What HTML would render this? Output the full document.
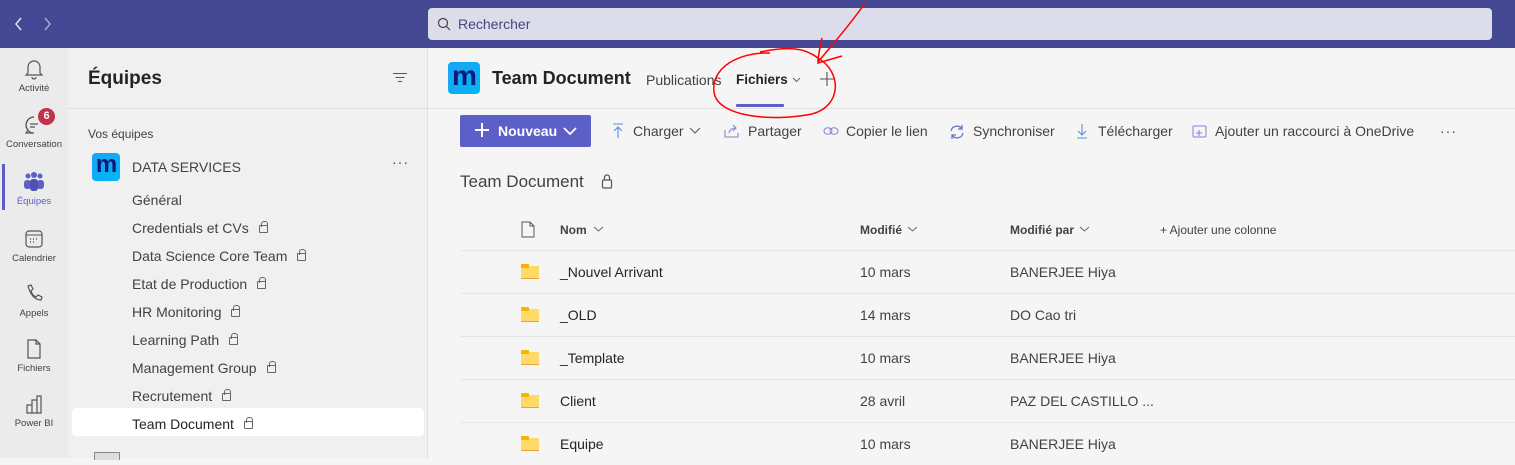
<!DOCTYPE html>
<html><head><meta charset="utf-8"><style>
*{box-sizing:border-box;margin:0;padding:0}
body{width:1515px;height:458px;overflow:hidden;font-family:"Liberation Sans",sans-serif;background:#f5f5f5;position:relative;color:#242424}
.abs{position:absolute}
#top{left:0;top:0;width:1515px;height:48px;background:#444791}
#search{left:428px;top:8px;width:1064px;height:32px;background:#dcdcea;border-radius:4px;color:#424780;font-size:14px;line-height:32px;padding-left:30px}
#rail{left:0;top:48px;width:68px;height:410px;background:#ebebeb}
.ri{position:absolute;left:0;width:68px;text-align:center;font-size:9.5px;color:#424242}
.ri svg{display:block;margin:0 auto 3px}
#panel{left:68px;top:48px;width:360px;height:410px;background:#f0f0f0;border-right:1px solid #e0e0e0}
.ch{position:absolute;left:64px;font-size:14px;color:#424242}
.lock{display:inline-block;width:9px;height:8px;border:1.2px solid #666;border-radius:1px;margin-left:10px;position:relative;top:0}
.lock:before{content:"";position:absolute;left:1px;top:-5px;width:5px;height:5px;border:1.2px solid #666;border-bottom:none;border-radius:3px 3px 0 0}
.logo{background:linear-gradient(135deg,#1aa3f5,#00b7f5);border-radius:4px;color:#0d1a7a;font-weight:bold;text-align:center;font-family:"Liberation Sans",sans-serif;letter-spacing:-1px}
.tb{position:absolute;top:123px;font-size:14px;color:#424242}
.hd{position:absolute;top:223px;font-size:12px;font-weight:bold;color:#424242}
.row{position:absolute;left:460px;width:1055px;height:43px;border-top:1px solid #e6e6e6;font-size:14px;color:#242424}
.row span{position:absolute;top:13px}
.fold{position:absolute;left:61px;top:15px;width:18px;height:13px;background:#ffd96a;border-bottom:1px solid #e8a33a}
.fold:before{content:"";position:absolute;left:0;top:-2px;width:8px;height:4px;background:#f8b200;border-radius:1px}
</style></head><body>
<div id="top" class="abs">
<svg class="abs" style="left:14px;top:16px" width="40" height="16"><path d="M7 2 L2 8 L7 14" stroke="#e0e0f0" stroke-width="1.5" fill="none"/><path d="M31 2 L36 8 L31 14" stroke="#a8aad0" stroke-width="1.5" fill="none"/></svg>
</div>
<div id="search" class="abs">Rechercher<svg class="abs" style="left:9px;top:9px" width="14" height="14"><circle cx="6" cy="6" r="4.5" stroke="#424242" stroke-width="1.2" fill="none"/><path d="M9.5 9.5L13 13" stroke="#424242" stroke-width="1.2"/></svg></div>

<div id="rail" class="abs">
<div class="abs" style="left:2px;top:116px;width:3px;height:46px;background:#5b5fc7"></div>
<div class="ri" style="top:10px"><svg width="20" height="22"><path d="M4 15V9a6 6 0 0 1 12 0v6l2 2H2z M8 19a2 2 0 0 0 4 0" stroke="#555" stroke-width="1.2" fill="none"/></svg>Activité</div>
<div class="ri" style="top:66px"><svg width="22" height="22"><path d="M11 3a8 8 0 1 0 0 16H3l2-3A8 8 0 0 1 11 3z M7 10h8M7 13h5" stroke="#555" stroke-width="1.2" fill="none"/></svg>Conversation</div>
<div class="abs" style="left:38px;top:60px;width:17px;height:17px;border-radius:50%;background:#c4314b;color:#fff;font-size:11px;font-weight:bold;text-align:center;line-height:17px">6</div>
<div class="ri" style="top:123px;color:#5b5fc7"><svg width="24" height="22"><circle cx="6" cy="5" r="2.5" fill="#5b5fc7"/><circle cx="12" cy="4" r="3" fill="#5b5fc7"/><circle cx="18" cy="5" r="2.5" fill="#5b5fc7"/><rect x="2" y="9" width="7" height="9" rx="3" fill="#5b5fc7"/><rect x="15" y="9" width="7" height="9" rx="3" fill="#5b5fc7"/><rect x="8" y="8" width="8" height="12" rx="3" fill="#4f52b2"/></svg>Équipes</div>
<div class="ri" style="top:180px"><svg width="22" height="22"><rect x="3" y="3" width="16" height="16" rx="3" stroke="#555" stroke-width="1.2" fill="none"/><path d="M3 7h16" stroke="#555"/><path d="M7 11h1M10 11h1M13 11h1M7 14h1M10 14h1" stroke="#555" stroke-width="1.4"/></svg>Calendrier</div>
<div class="ri" style="top:235px"><svg width="22" height="22"><path d="M5 3l3-1 2 4-2 2q1 4 5 6l2-2 4 2-1 3q-9 0-13-14z" stroke="#555" stroke-width="1.2" fill="none"/></svg>Appels</div>
<div class="ri" style="top:290px"><svg width="22" height="22"><path d="M5 2h8l4 4v14H5z M13 2v4h4" stroke="#555" stroke-width="1.2" fill="none"/></svg>Fichiers</div>
<div class="ri" style="top:345px"><svg width="22" height="22"><path d="M4 20V12h5V20z M9 20V7h5V20z M14 20V3h4V20z" stroke="#555" stroke-width="1.2" fill="none"/></svg>Power BI</div>
</div>

<div id="panel" class="abs">
<div class="abs" style="left:20px;top:20px;font-size:19px;font-weight:bold;color:#242424">Équipes</div>
<svg class="abs" style="left:324px;top:24px" width="16" height="12"><path d="M1 1.5h14M3.5 5.5h9M6 9.5h4" stroke="#555" stroke-width="1.1"/></svg>
<div class="abs" style="left:0;top:60px;width:360px;height:1px;background:#dedede"></div>
<div class="abs" style="left:20px;top:79px;font-size:12px;color:#424242">Vos équipes</div>
<div class="abs logo" style="left:24px;top:105px;width:28px;height:28px;font-size:24px;line-height:24px">m</div>
<div class="abs" style="left:64px;top:111px;font-size:14px;color:#424242">DATA SERVICES</div>
<div class="abs" style="left:324px;top:106px;font-size:14px;color:#424242;letter-spacing:1px">···</div>
<div class="ch" style="top:144px">Général</div>
<div class="ch" style="top:172px">Credentials et CVs<span class="lock"></span></div>
<div class="ch" style="top:200px">Data Science Core Team<span class="lock"></span></div>
<div class="ch" style="top:228px">Etat de Production<span class="lock"></span></div>
<div class="ch" style="top:256px">HR Monitoring<span class="lock"></span></div>
<div class="ch" style="top:284px">Learning Path<span class="lock"></span></div>
<div class="ch" style="top:312px">Management Group<span class="lock"></span></div>
<div class="ch" style="top:340px">Recrutement<span class="lock"></span></div>
<div class="abs" style="left:4px;top:360px;width:352px;height:28px;background:#fff;border-radius:4px"></div>
<div class="ch" style="top:368px;color:#242424">Team Document<span class="lock"></span></div>
<div class="abs" style="left:26px;top:404px;width:26px;height:8px;border:1px solid #888;border-bottom:none;background:#ddd"></div>
</div>

<div class="abs logo" style="left:448px;top:62px;width:32px;height:32px;font-size:28px;line-height:28px">m</div>
<div class="abs" style="left:492px;top:68px;font-size:18px;font-weight:bold">Team Document</div>
<div class="abs" style="left:646px;top:72px;font-size:14px;color:#424242">Publications</div>
<div class="abs" style="left:736px;top:72px;font-size:13.5px;font-weight:bold;color:#242424">Fichiers</div>
<svg class="abs" style="left:792px;top:77px" width="9" height="6"><path d="M1 1l3.5 3.5 3.5-3.5" stroke="#666" fill="none"/></svg>
<div class="abs" style="left:736px;top:104px;width:48px;height:3px;background:#5b5fc7;border-radius:1px"></div>
<svg class="abs" style="left:820px;top:72px" width="14" height="14"><path d="M7 0v14M0 7h14" stroke="#555" stroke-width="1.1"/></svg>
<div class="abs" style="left:428px;top:108px;width:1087px;height:1px;background:#e0e0e0"></div>

<div class="abs" style="left:460px;top:115px;width:131px;height:32px;background:#5b5fc7;border-radius:2px;color:#fff;font-size:14px;font-weight:bold;line-height:32px;padding-left:38px">Nouveau</div>
<svg class="abs" style="left:474px;top:122px" width="16" height="16"><path d="M8 1v14M1 8h14" stroke="#fff" stroke-width="2"/></svg>
<svg class="abs" style="left:563px;top:127px" width="14" height="8"><path d="M1 1l6 6 6-6" stroke="#fff" stroke-width="1.8" fill="none"/></svg>
<svg class="abs" style="left:612px;top:123px" width="12" height="16"><path d="M1 1h10M6 4v11M2 8l4-4 4 4" stroke="#5b8fd4" stroke-width="1.1" fill="none"/></svg>
<div class="tb" style="left:633px">Charger</div>
<svg class="abs" style="left:689px;top:127px" width="12" height="7"><path d="M1 1l5 5 5-5" stroke="#555" fill="none"/></svg>
<svg class="abs" style="left:724px;top:124px" width="16" height="14"><path d="M1 6v7h13V9 M5 9q1-5 7-5 M9 1l3 3-3 3" stroke="#8a7fd0" stroke-width="1.1" fill="none"/></svg>
<div class="tb" style="left:748px">Partager</div>
<svg class="abs" style="left:823px;top:126px" width="16" height="10"><ellipse cx="5" cy="5" rx="4" ry="3.3" stroke="#8a7fd0" fill="none"/><ellipse cx="11" cy="5" rx="4" ry="3.3" stroke="#8a7fd0" fill="none"/></svg>
<div class="tb" style="left:846px">Copier le lien</div>
<svg class="abs" style="left:949px;top:124px" width="16" height="16"><path d="M13 5a6 6 0 0 0-11 2M3 11a6 6 0 0 0 11-2 M13 1v4H9 M3 15v-4h4" stroke="#5b6fcf" stroke-width="1.2" fill="none"/></svg>
<div class="tb" style="left:973px">Synchroniser</div>
<svg class="abs" style="left:1076px;top:123px" width="12" height="16"><path d="M6 1v11M2 8l4 4 4-4M1 15h10" stroke="#5b8fd4" stroke-width="1.1" fill="none"/></svg>
<div class="tb" style="left:1098px">Télécharger</div>
<svg class="abs" style="left:1192px;top:124px" width="16" height="14"><rect x="1" y="2" width="13" height="11" rx="1" stroke="#8a7fd0" fill="none"/><path d="M4 9h6M7 6v6" stroke="#8a7fd0"/></svg>
<div class="tb" style="left:1215px">Ajouter un raccourci à OneDrive</div>
<div class="tb" style="left:1440px;letter-spacing:1px">···</div>

<div class="abs" style="left:460px;top:172px;font-size:17px;color:#424242">Team Document</div>
<svg class="abs" style="left:601px;top:173px" width="12" height="16"><rect x="1.5" y="7" width="9" height="8" rx="1" stroke="#555" stroke-width="1.2" fill="none"/><path d="M3.5 7V4.5a2.5 2.5 0 0 1 5 0V7" stroke="#555" stroke-width="1.2" fill="none"/></svg>

<svg class="abs" style="left:521px;top:221px" width="14" height="17"><path d="M1 1h8l4 4v11H1z M9 1v4h4" stroke="#555" fill="none"/></svg>
<div class="hd" style="left:560px">Nom</div>
<svg class="abs" style="left:593px;top:226px" width="11" height="6"><path d="M1 1l4.5 4 4.5-4" stroke="#666" fill="none"/></svg>
<div class="hd" style="left:860px">Modifié</div>
<svg class="abs" style="left:907px;top:226px" width="11" height="6"><path d="M1 1l4.5 4 4.5-4" stroke="#666" fill="none"/></svg>
<div class="hd" style="left:1010px">Modifié par</div>
<svg class="abs" style="left:1079px;top:226px" width="11" height="6"><path d="M1 1l4.5 4 4.5-4" stroke="#666" fill="none"/></svg>
<div class="hd" style="left:1160px;color:#424242;font-weight:normal">+ Ajouter une colonne</div>

<div class="row" style="top:250px"><i class="fold"></i><span style="left:100px">_Nouvel Arrivant</span><span style="left:400px;color:#424242">10 mars</span><span style="left:550px;color:#424242">BANERJEE Hiya</span></div>
<div class="row" style="top:293px"><i class="fold"></i><span style="left:100px">_OLD</span><span style="left:400px;color:#424242">14 mars</span><span style="left:550px;color:#424242">DO Cao tri</span></div>
<div class="row" style="top:336px"><i class="fold"></i><span style="left:100px">_Template</span><span style="left:400px;color:#424242">10 mars</span><span style="left:550px;color:#424242">BANERJEE Hiya</span></div>
<div class="row" style="top:379px"><i class="fold"></i><span style="left:100px">Client</span><span style="left:400px;color:#424242">28 avril</span><span style="left:550px;color:#424242">PAZ DEL CASTILLO ...</span></div>
<div class="row" style="top:422px"><i class="fold"></i><span style="left:100px">Equipe</span><span style="left:400px;color:#424242">10 mars</span><span style="left:550px;color:#424242">BANERJEE Hiya</span></div>

<svg class="abs" style="left:0;top:0" width="1515" height="458"><path d="M770 53 C738 52 711 68 714 92 C717 117 772 122 812 114 C842 106 842 72 818 58 C805 48 790 46 760 52" stroke="#f00" stroke-width="1.5" fill="none"/><path d="M865 3 C850 25 832 45 818 62 M822 38 C820 48 818 55 818 63 L842 56" stroke="#f00" stroke-width="1.5" fill="none"/></svg>
</body></html>
